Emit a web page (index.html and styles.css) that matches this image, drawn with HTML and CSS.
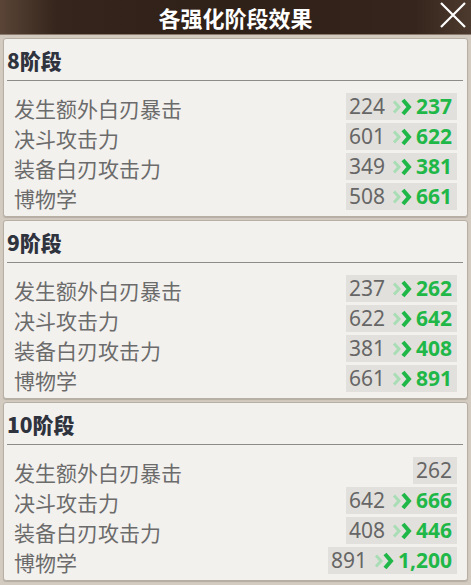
FILE: index.html
```html
<!DOCTYPE html>
<html lang="zh-CN">
<head>
  <meta charset="UTF-8">
  <meta name="viewport" content="width=device-width, initial-scale=1.0">
  <title>各强化阶段效果</title>
  <link rel="stylesheet" href="styles.css">
</head>
<body>
  <!-- 상단 제목 바 -->
  <div class="header">
    <h1 class="title">各强化阶段效果</h1>
    <svg class="close" width="26" height="26" viewBox="0 0 26 26">
      <path d="M1 1 L25 25 M25 1 L1 25" stroke="#fff" stroke-width="2.2" fill="none"/>
    </svg>
  </div>

  <div class="list">
    <!-- 8단계 -->
    <div class="card">
      <div class="card-title">8阶段</div>
      <div class="rows">
        <div class="row"><span class="label">发生额外白刃暴击</span><span class="val"><span class="old">224</span><svg class="arrow" width="22" height="18" viewBox="0 0 22 18"><polyline points="2,3.5 7,9 2,14.5" class="arrow-back"/><polyline points="11,2 17,9 11,16" class="arrow-front"/></svg><span class="new">237</span></span></div>
        <div class="row"><span class="label">决斗攻击力</span><span class="val"><span class="old">601</span><svg class="arrow" width="22" height="18" viewBox="0 0 22 18"><polyline points="2,3.5 7,9 2,14.5" class="arrow-back"/><polyline points="11,2 17,9 11,16" class="arrow-front"/></svg><span class="new">622</span></span></div>
        <div class="row"><span class="label">装备白刃攻击力</span><span class="val"><span class="old">349</span><svg class="arrow" width="22" height="18" viewBox="0 0 22 18"><polyline points="2,3.5 7,9 2,14.5" class="arrow-back"/><polyline points="11,2 17,9 11,16" class="arrow-front"/></svg><span class="new">381</span></span></div>
        <div class="row"><span class="label">博物学</span><span class="val"><span class="old">508</span><svg class="arrow" width="22" height="18" viewBox="0 0 22 18"><polyline points="2,3.5 7,9 2,14.5" class="arrow-back"/><polyline points="11,2 17,9 11,16" class="arrow-front"/></svg><span class="new">661</span></span></div>
      </div>
    </div>

    <!-- 9단계 -->
    <div class="card">
      <div class="card-title">9阶段</div>
      <div class="rows">
        <div class="row"><span class="label">发生额外白刃暴击</span><span class="val"><span class="old">237</span><svg class="arrow" width="22" height="18" viewBox="0 0 22 18"><polyline points="2,3.5 7,9 2,14.5" class="arrow-back"/><polyline points="11,2 17,9 11,16" class="arrow-front"/></svg><span class="new">262</span></span></div>
        <div class="row"><span class="label">决斗攻击力</span><span class="val"><span class="old">622</span><svg class="arrow" width="22" height="18" viewBox="0 0 22 18"><polyline points="2,3.5 7,9 2,14.5" class="arrow-back"/><polyline points="11,2 17,9 11,16" class="arrow-front"/></svg><span class="new">642</span></span></div>
        <div class="row"><span class="label">装备白刃攻击力</span><span class="val"><span class="old">381</span><svg class="arrow" width="22" height="18" viewBox="0 0 22 18"><polyline points="2,3.5 7,9 2,14.5" class="arrow-back"/><polyline points="11,2 17,9 11,16" class="arrow-front"/></svg><span class="new">408</span></span></div>
        <div class="row"><span class="label">博物学</span><span class="val"><span class="old">661</span><svg class="arrow" width="22" height="18" viewBox="0 0 22 18"><polyline points="2,3.5 7,9 2,14.5" class="arrow-back"/><polyline points="11,2 17,9 11,16" class="arrow-front"/></svg><span class="new">891</span></span></div>
      </div>
    </div>

    <!-- 10단계 -->
    <div class="card">
      <div class="card-title">10阶段</div>
      <div class="rows">
        <div class="row"><span class="label">发生额外白刃暴击</span><span class="val"><span class="old">262</span></span></div>
        <div class="row"><span class="label">决斗攻击力</span><span class="val"><span class="old">642</span><svg class="arrow" width="22" height="18" viewBox="0 0 22 18"><polyline points="2,3.5 7,9 2,14.5" class="arrow-back"/><polyline points="11,2 17,9 11,16" class="arrow-front"/></svg><span class="new">666</span></span></div>
        <div class="row"><span class="label">装备白刃攻击力</span><span class="val"><span class="old">408</span><svg class="arrow" width="22" height="18" viewBox="0 0 22 18"><polyline points="2,3.5 7,9 2,14.5" class="arrow-back"/><polyline points="11,2 17,9 11,16" class="arrow-front"/></svg><span class="new">446</span></span></div>
        <div class="row"><span class="label">博物学</span><span class="val"><span class="old">891</span><svg class="arrow" width="22" height="18" viewBox="0 0 22 18"><polyline points="2,3.5 7,9 2,14.5" class="arrow-back"/><polyline points="11,2 17,9 11,16" class="arrow-front"/></svg><span class="new">1,200</span></span></div>
      </div>
    </div>
  </div>
</body>
</html>
```

FILE: styles.css
```css
body {
  margin: 0;
  width: 471px;
  height: 585px;
  overflow: hidden;
  background-color: #d3cbc0;
  font-family: "Noto Sans", "Noto Sans CJK SC", sans-serif;
}

/* 상단 제목 바 */
.header {
  position: relative;
  height: 35px;
  display: flex;
  align-items: center;
  justify-content: center;
  background: linear-gradient(90deg, #5a4537 0%, #35251c 12%, #2f2018 50%, #35251c 88%, #4d3a2e 100%);
  border-bottom: 1px solid #8a7b6e;
  box-sizing: border-box;
}

.title {
  margin: 0;
  font-size: 22px;
  font-weight: bold;
  color: #fff;
  font-family: "Noto Sans CJK SC", sans-serif;
  line-height: 1;
}

.close {
  position: absolute;
  right: 5px;
  top: 2px;
}

.list {
  display: flex;
  flex-direction: column;
  gap: 3px;
  padding: 3px 3px 0 3px;
}

.card {
  background-color: #f3f1ee;
  border: 1px solid #b8afa4;
  border-radius: 3px;
  box-shadow: 0 1px 1px rgba(0, 0, 0, 0.15);
}

.card-title {
  height: 41px;
  margin: 0 4px 0 3px;
  border-bottom: 1px solid #8e8c8a;
  display: flex;
  align-items: center;
  font-size: 21px;
  font-weight: 900;
  color: #2f333e;
  font-family: "Noto Sans CJK SC", sans-serif;
}

.rows {
  display: flex;
  flex-direction: column;
  gap: 3px;
  padding: 12px 10px 6px 10px;
}

.row {
  height: 27px;
  display: flex;
  align-items: center;
  justify-content: space-between;
}

.label {
  font-size: 21px;
  color: #6b6b6b;
  font-family: "Noto Sans CJK SC", sans-serif;
  line-height: 1;
  padding-top: 3px;
}

.val {
  height: 27px;
  display: flex;
  align-items: center;
  padding: 0 5px 0 3px;
  background-color: #e2e0dc;
  font-size: 21px;
  line-height: 1;
}

.old {
  color: #666;
}

.arrow {
  margin: 0 2px 0 7px;
}

/* 뒤쪽 화살표는 옅은 초록 */
.arrow-back {
  fill: none;
  stroke: #a9ddb5;
  stroke-width: 3;
}

.arrow-front {
  fill: none;
  stroke: #1fb848;
  stroke-width: 4;
}

.new {
  color: #1fb848;
  font-weight: bold;
}
```
